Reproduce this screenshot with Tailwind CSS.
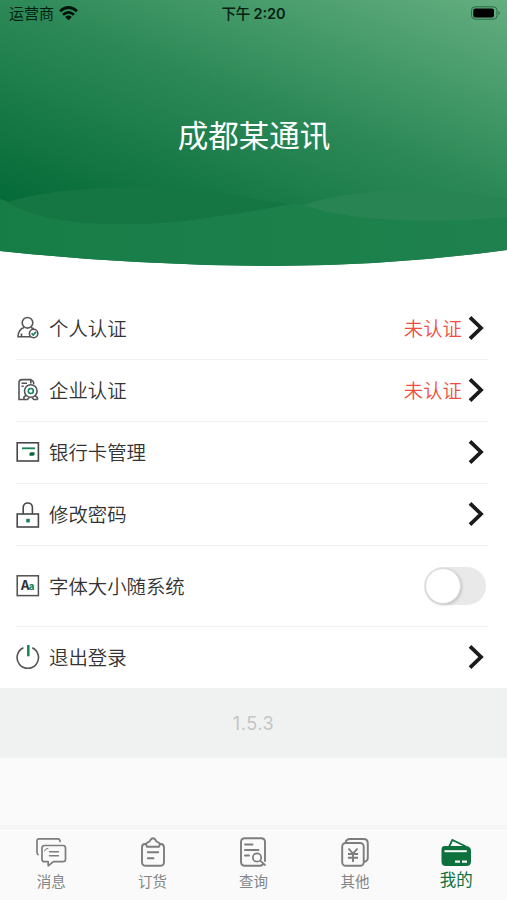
<!DOCTYPE html>
<html lang="zh-CN">
<head>
<meta charset="utf-8">
<title>我的</title>
<script src="https://cdn.jsdelivr.net/npm/@tailwindcss/browser@4"></script>
</head>
<body class="w-[507px] h-[900px] overflow-hidden bg-[#fafafa] font-['Inter','Noto_Sans_CJK_SC',sans-serif]">
<div class="flex flex-col h-[900px]">
  <header class="relative h-[298px] shrink-0 bg-white">
    <svg class="absolute inset-0" width="507" height="297" viewBox="0 0 507 297">
      <defs>
        <linearGradient id="g" gradientUnits="userSpaceOnUse" x1="0" y1="195" x2="126" y2="-142">
          <stop offset="0" stop-color="#056b38"/><stop offset=".5" stop-color="#2c8957"/><stop offset="1" stop-color="#64ae80"/>
        </linearGradient>
        <linearGradient id="w" x1="0" x2="1" y1="0" y2="0"><stop offset="0" stop-color="#177d47"/><stop offset="1" stop-color="#1f824e"/></linearGradient>
      </defs>
      <path d="M0 0H507V250Q390 266 270 266Q130 265 0 251Z" fill="url(#g)"/>
      <path d="M0 199Q4 200 8 202C50 229 150 227 205 218Q250 212 285 205L303 205C350 222 430 224 507 217V250Q390 266 270 266Q130 265 0 251Z" fill="url(#w)"/>
      <path d="M8 202C60 184 180 183 240 196Q265 202 290 204Q250 212 205 218C150 227 50 229 8 202Z" fill="#167643"/>
      <path d="M285 205Q295 204 303 205C365 186 430 187 507 199V217C430 224 350 222 303 205Z" fill="#288453"/>
    </svg>
    <div class="relative flex h-7 items-center justify-between pl-[9px] pr-[6px] text-[#04200f]">
      <div class="flex flex-1 items-center gap-[5px]">
        <span class="text-[15px] leading-7">运营商</span>
        <svg class="-mt-[2px]" width="19" height="15" viewBox="0 0 19 15" fill="none" stroke="#03120a" stroke-width="2.7">
          <path d="M1 5.3Q9.5-2.3 18 5.3M4 8.8Q9.5 3.9 15 8.8"/><path d="M9.5 14.2L6.2 11Q9.5 8.2 12.8 11Z" fill="#03120a" stroke="none"/>
        </svg>
      </div>
      <div class="-ml-[3px] flex items-center gap-[3px] text-[14.5px] font-semibold leading-7"><span class="font-medium">下午</span><span>2:20</span></div>
      <div class="flex flex-1 justify-end">
        <svg class="-mt-[2px]" width="31" height="14" viewBox="0 0 31 14"><rect x="1.5" y=".8" width="25.5" height="12.4" rx="3.5" fill="none" stroke="#2e6847"/><rect x="3.3" y="2.6" width="20.7" height="8.8" rx="2" fill="#000"/><path d="M28.5 5Q31.5 7 28.5 9Z" fill="#347350"/></svg>
      </div>
    </div>
    <h1 class="relative mt-[85px] pl-px text-center text-[30.5px] leading-[46px] font-normal text-white">成都某通讯</h1>
  </header>

  <main class="shrink-0 bg-white pl-[18px] pr-[19px] text-[19.4px] font-[350] text-[#333]">
    <div class="-ml-[2px] flex h-[62px] items-center border-b border-[#f2f2f2]">
      <svg class="-mt-px mr-[9px]" width="24" height="24" viewBox="0 0 24 24" fill="none" stroke="#555" stroke-width="1.6"><circle cx="11.5" cy="6.8" r="5.3"/><path d="M8 11.4C3.5 13 2 16.5 2 20.8H15M15 11.4Q17.2 12.1 18 13.8"/><path d="M5.5 20.5V17.5"/><circle cx="17.6" cy="17.5" r="4.2"/><path d="M15.6 17.3L17.2 19L20.1 15.9" stroke="#168456" stroke-width="1.6"/></svg>
      <span class="flex-1 pt-[2px]">个人认证</span><span class="mr-[6px] pt-[2px] text-[#ed4f43]">未认证</span>
      <svg class="-mt-[2px] mr-[4px]" width="16" height="26" viewBox="0 0 16 26" fill="none" stroke="#1b1b1b" stroke-width="3.8"><path d="M2 2.4L13 13L2 23.6"/></svg>
    </div>
    <div class="-ml-[2px] flex h-[62px] items-center border-b border-[#f2f2f2]">
      <svg class="-mt-px mr-[9px]" width="24" height="24" viewBox="0 0 24 24" fill="none" stroke="#555" stroke-width="1.6"><path d="M8.5 21.5H2.2M3 21.5V4.8Q3 1.6 5.8 1.6H14.8V5.5M14.8 2.3Q17.6 2.3 17.8 6.2"/><path d="M5.5 5.2H11M5.5 8.2H7.7"/><circle cx="14.8" cy="13" r="6.3"/><circle cx="14.8" cy="13" r="2.5" stroke="#168456"/><path d="M10 17.5Q6.5 19.3 8.5 21.5H11.5L13.3 19.5M19 17.8Q23 20 21 21.5H17.8L16 19.5"/></svg>
      <span class="flex-1 pt-[2px]">企业认证</span><span class="mr-[6px] pt-[2px] text-[#ed4f43]">未认证</span>
      <svg class="-mt-[2px] mr-[4px]" width="16" height="26" viewBox="0 0 16 26" fill="none" stroke="#1b1b1b" stroke-width="3.8"><path d="M2 2.4L13 13L2 23.6"/></svg>
    </div>
    <div class="-ml-[2px] flex h-[62px] items-center border-b border-[#f2f2f2]">
      <svg class="-mt-px mr-[9px]" width="24" height="24" viewBox="0 0 24 24" fill="none" stroke="#484848" stroke-width="1.6"><rect x="1.2" y="2.8" width="21.2" height="18.2"/><path d="M6 8.3H19" stroke="#168456" stroke-width="1.8"/><path d="M14.6 12.3H18.5V14.5L17.5 15.8H13.5V13.5Z" fill="#07663b" stroke="none"/></svg>
      <span class="flex-1 pt-[2px]">银行卡管理</span>
      <svg class="-mt-px mr-[4px]" width="16" height="26" viewBox="0 0 16 26" fill="none" stroke="#1b1b1b" stroke-width="3.8"><path d="M2 2.4L13 13L2 23.6"/></svg>
    </div>
    <div class="-ml-[2px] flex h-[62px] items-center border-b border-[#f2f2f2]">
      <svg class="mr-[9px]" width="24" height="28" viewBox="0 0 24 28" fill="none" stroke="#484848" stroke-width="1.6"><rect x="1.2" y="13" width="21.2" height="13"/><path d="M7.2 13V6.8C7.2 .4 16.4 .4 16.4 6.8V13"/><rect x="10.2" y="17.8" width="3.6" height="3.6" fill="#168456" stroke="none"/></svg>
      <span class="flex-1 pt-[3px]">修改密码</span>
      <svg class="-mt-px mr-[4px]" width="16" height="26" viewBox="0 0 16 26" fill="none" stroke="#1b1b1b" stroke-width="3.8"><path d="M2 2.4L13 13L2 23.6"/></svg>
    </div>
    <div class="-ml-[2px] flex h-[81px] items-center border-b border-[#f2f2f2]">
      <svg class="mr-[9px]" width="24" height="24" viewBox="0 0 24 24"><rect x="1.2" y="1.8" width="21.2" height="19.8" fill="none" stroke="#505050" stroke-width="1.5"/><text x="4.5" y="15.8" font-size="12.5" font-weight="700" fill="#333">A</text><text x="12.8" y="15.8" font-size="9.5" font-weight="800" fill="#168456">a</text></svg>
      <span class="flex-1 pt-[3px]">字体大小随系统</span>
      <span class="mr-[2px] flex h-[38px] w-[62px] rounded-full bg-[#e9e9e9] p-[1px]"><span class="size-[36px] rounded-full border border-[#d9d9d9] bg-white shadow-[1px_1px_3px_rgba(0,0,0,0.18)]"></span></span>
    </div>
    <div class="-ml-[2px] flex h-[61px] items-center">
      <svg class="-mt-px mr-[9px]" width="24" height="26" viewBox="0 0 24 26" fill="none" stroke="#555" stroke-width="1.6"><path d="M7.4 3.8A10.7 10.7 0 1 0 16.2 3.8"/><path d="M12.3 1V12.3" stroke="#168456" stroke-width="2.5"/></svg>
      <span class="flex-1 pt-[3px]">退出登录</span>
      <svg class="-mt-[2px] mr-[4px]" width="16" height="26" viewBox="0 0 16 26" fill="none" stroke="#1b1b1b" stroke-width="3.8"><path d="M2 2.4L13 13L2 23.6"/></svg>
    </div>
  </main>

  <div class="flex h-[70px] shrink-0 items-center justify-center bg-[#f0f2f1] text-[18px] tracking-[0.6px] text-[#c3c4c4]">1.5.3</div>
  <div class="flex-1"></div>

  <nav class="grid h-[75px] w-[507px] shrink-0 grid-cols-5 border-t-[4px] border-[#f5f5f5] text-[14.5px] text-[#858585]">
    <a class="flex flex-col items-center pt-[8px] pl-px">
      <svg width="34" height="32" viewBox="0 0 34 32" fill="none" stroke="#7d7d7d" stroke-width="1.7" stroke-linejoin="round" stroke-linecap="round"><path d="M4 17.5Q3 17 3 15V4Q3 1.8 5.2 1.8H24Q26 1.8 26 4.5"/><path d="M10.5 8.5H29Q31.5 8.5 31.5 11V22.3Q31.5 24.7 29 24.7H19.5L14.2 28.8V24.7H10.5Q8 24.7 8 22.3V11Q8 8.5 10.5 8.5Z"/><path d="M15.5 14.7H24.5M15.5 18.7H24.5" stroke-width="1.4"/><path d="M10.5 14Q10.7 11.3 14 11.3" stroke-width="1"/></svg>
      <span class="pt-[2px] leading-[22px]">消息</span>
    </a>
    <a class="flex flex-col items-center pt-[8px] pl-px">
      <svg width="34" height="32" viewBox="0 0 34 32" fill="none" stroke="#7d7d7d" stroke-width="1.9" stroke-linejoin="round" stroke-linecap="round"><path d="M10 7H9Q6 7 6 10.5V25Q6 28.8 10 28.8H24Q28 28.8 28 25V10.5Q28 7 25 7H24"/><path d="M11 9.8Q8.8 6 12.8 4.8Q13.8 4.8 14.2 3.2Q17-.8 19.8 3.2Q20.2 4.8 21.2 4.8Q25.2 6 23 9.8Z"/><path d="M11.8 15.3H22.2M11.8 21.2H17.5"/></svg>
      <span class="pt-[2px] leading-[22px]">订货</span>
    </a>
    <a class="flex flex-col items-center pt-[8px]">
      <svg width="34" height="32" viewBox="0 0 34 32" fill="none" stroke="#7d7d7d" stroke-width="1.9" stroke-linejoin="round" stroke-linecap="round"><path d="M27 27.3Q25.8 28.8 23 28.8H9Q5 28.8 5 24.8V5Q5 1.2 9 1.2H25Q29 1.2 29 5V24"/><path d="M9 7.5H16.5M9 13H22.5M9 18.5H13"/><circle cx="21" cy="20.5" r="4.2" stroke-width="1.7"/><path d="M24.2 23.7L29 28" stroke-width="1.7"/></svg>
      <span class="pt-[2px] leading-[22px]">查询</span>
    </a>
    <a class="flex flex-col items-center pt-[8px]">
      <svg width="34" height="32" viewBox="0 0 34 32" fill="none" stroke="#7d7d7d" stroke-width="1.9" stroke-linejoin="round"><rect x="4.2" y="6" width="21.5" height="22.8" rx="3.5"/><path d="M7.5 5.5Q8.5 2 12 2H25.5Q29.8 2 29.8 6.3V21Q29.8 24 25.7 25"/><path d="M10.5 11.5L15 16.7L19.5 11.5M15 16.7V25M10 17H20M10 20.8H20"/></svg>
      <span class="pt-[2px] leading-[22px]">其他</span>
    </a>
    <a class="flex flex-col items-center pt-[8px] text-[16.5px] text-[#0c713d]">
      <svg width="34" height="30" viewBox="0 0 34 30"><path d="M9.5 11L13.3 3L27 9.5" fill="none" stroke="#0c713d" stroke-width="1.8"/><path d="M5.5 9H26Q32 9 32 14V24.5Q32 29 27 29H7Q2.5 29 2.5 24.5V13Q2.5 9 5.5 9Z" fill="#0c713d"/><path d="M5.5 14.2H27.8" stroke="#fafafa" stroke-width="2"/><path d="M16 24.6H21M23 24.6H28" stroke="#fafafa" stroke-width="2.2"/></svg>
      <span class="pt-[2px] leading-[22px]">我的</span>
    </a>
  </nav>
</div>
</body>
</html>
